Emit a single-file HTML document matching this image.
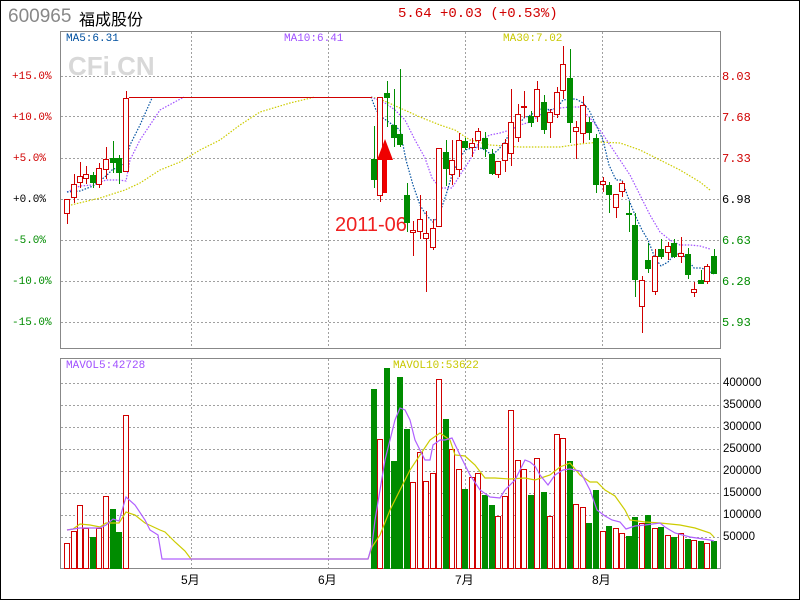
<!DOCTYPE html>
<html><head><meta charset="utf-8"><style>
html,body{margin:0;padding:0;background:#fff}
#w{position:relative;width:798px;height:598px;border:1px solid #000;overflow:hidden;font-family:"Liberation Mono",monospace}
svg{position:absolute;left:-1px;top:-1px}
.t{position:absolute;white-space:nowrap}
</style></head><body><div id="w">
<svg width="800" height="600" viewBox="0 0 800 600">
<g stroke="#a0a0a0" stroke-dasharray="2,2" stroke-width="1">
<line x1="61" x2="720" y1="76.5" y2="76.5"/><line x1="61" x2="720" y1="116.5" y2="116.5"/><line x1="61" x2="720" y1="158.5" y2="158.5"/><line x1="61" x2="720" y1="199.5" y2="199.5"/><line x1="61" x2="720" y1="240.5" y2="240.5"/><line x1="61" x2="720" y1="281.5" y2="281.5"/><line x1="61" x2="720" y1="322.5" y2="322.5"/>
<line x1="191.5" x2="191.5" y1="32" y2="348"/><line x1="328.5" x2="328.5" y1="32" y2="348"/><line x1="465.5" x2="465.5" y1="32" y2="348"/><line x1="602.5" x2="602.5" y1="32" y2="348"/>
<line x1="61" x2="720" y1="383.5" y2="383.5"/><line x1="61" x2="720" y1="405.5" y2="405.5"/><line x1="61" x2="720" y1="427.5" y2="427.5"/><line x1="61" x2="720" y1="449.5" y2="449.5"/><line x1="61" x2="720" y1="471.5" y2="471.5"/><line x1="61" x2="720" y1="493.5" y2="493.5"/><line x1="61" x2="720" y1="515.5" y2="515.5"/><line x1="61" x2="720" y1="537.5" y2="537.5"/>
<line x1="191.5" x2="191.5" y1="359" y2="568"/><line x1="328.5" x2="328.5" y1="359" y2="568"/><line x1="465.5" x2="465.5" y1="359" y2="568"/><line x1="602.5" x2="602.5" y1="359" y2="568"/>
</g>
<rect x="60.5" y="31.5" width="660" height="317" fill="none" stroke="#888"/>
<rect x="60.5" y="358.5" width="660" height="210" fill="none" stroke="#888"/>
<text x="68" y="75" font-family="Liberation Sans,sans-serif" font-weight="bold" font-size="26" fill="#d8d8d8">CFi.CN</text>
<text x="335" y="231" font-family="Liberation Sans,sans-serif" font-size="20" fill="#f02020">2011-06</text>
<g fill="none" stroke-width="1.2" stroke-dasharray="1.5,1.5">
<polyline stroke="#cccc00" points="71,205 100,198 125,190 140,183 160,170 180,162 200,150 220,140 240,125 260,112 290,103 315,97"/>
<polyline stroke="#cccc00" points="371,97 380,99 400,108 420,117 440,125 455,130 470,140 490,145 520,147 540,147 560,147 580,144 600,142 620,143 640,150 660,160 680,170 700,182 710,190"/>
<polyline stroke="#a050ff" points="67,192 80,186 93,185 106,180 119,180 126,181 130,160 140,140 150,125 160,110 184,97"/>
<polyline stroke="#a050ff" points="371,97 385,103 395,110 405,120 415,140 425,158 432,178 440,188 452,188 460,175 470,160 480,140 490,135 500,133 510,130 520,125 530,122 540,115 550,110 560,108 570,107 580,107 590,118 600,130 610,145 620,160 630,175 640,195 650,215 660,232 670,240 680,245 690,245 700,246 710,249"/>
<polyline stroke="#0050a0" points="67,192 80,191 93,186 106,176 113,169 119,168 126,160 130,145 140,125 152,98"/>
<polyline stroke="#0050a0" points="371,97 376,110 383,118 393,125 400,130 406,160 413,185 420,205 426,215 433,222 439,215 446,195 452,175 459,160 465,150 472,148 478,147 485,150 492,155 498,150 505,142 511,130 518,125 524,118 531,115 537,110 544,108 550,110 557,108 563,100 570,99 576,99 583,103 589,110 596,125 603,140 609,165 616,180 622,180 629,200 635,215 642,230 648,240 655,258 661,266 668,262 674,255 681,253 688,260 694,268 701,268 707,270 714,274"/>
</g>
<line x1="129" x2="372" y1="97.5" y2="97.5" stroke="#d00000" stroke-width="1"/>
<g stroke-width="1">
<g stroke="#d00000" fill="#fff">
<line x1="67.5" x2="67.5" y1="199" y2="224"/><rect x="64.5" y="199.5" width="5" height="14"/>
<line x1="74.5" x2="74.5" y1="174" y2="203"/><rect x="71.5" y="184.5" width="5" height="13"/>
<line x1="80.5" x2="80.5" y1="162" y2="188"/><rect x="77.5" y="176.5" width="5" height="6"/>
<line x1="86.5" x2="86.5" y1="166" y2="184"/><rect x="83.5" y="174.5" width="5" height="4"/>
<line x1="99.5" x2="99.5" y1="163" y2="188"/><rect x="96.5" y="168.5" width="5" height="16"/>
<line x1="106.5" x2="106.5" y1="147" y2="179"/><rect x="103.5" y="159.5" width="5" height="10"/>
<line x1="126.5" x2="126.5" y1="91" y2="171"/><rect x="123.5" y="98.5" width="5" height="73"/>
<line x1="380.5" x2="380.5" y1="97" y2="202"/><rect x="377.5" y="97.5" width="5" height="98"/>
<line x1="413.5" x2="413.5" y1="221" y2="256"/><rect x="410.5" y="230.5" width="5" height="2"/>
<line x1="420.5" x2="420.5" y1="195" y2="239"/><rect x="417.5" y="219.5" width="5" height="12"/>
<line x1="426.5" x2="426.5" y1="211" y2="292"/><rect x="423.5" y="233.5" width="5" height="5"/>
<line x1="433.5" x2="433.5" y1="219" y2="250"/><rect x="430.5" y="228.5" width="5" height="19"/>
<line x1="439.5" x2="439.5" y1="148" y2="226"/><rect x="436.5" y="148.5" width="5" height="78"/>
<line x1="452.5" x2="452.5" y1="140" y2="185"/><rect x="449.5" y="160.5" width="5" height="14"/>
<line x1="459.5" x2="459.5" y1="133" y2="177"/><rect x="456.5" y="140.5" width="5" height="29"/>
<line x1="472.5" x2="472.5" y1="138" y2="157"/><rect x="469.5" y="143.5" width="5" height="4"/>
<line x1="478.5" x2="478.5" y1="128" y2="150"/><rect x="475.5" y="131.5" width="5" height="9"/>
<line x1="498.5" x2="498.5" y1="161" y2="178"/><rect x="495.5" y="161.5" width="5" height="13"/>
<line x1="505.5" x2="505.5" y1="139" y2="172"/><rect x="502.5" y="143.5" width="5" height="17"/>
<line x1="511.5" x2="511.5" y1="89" y2="166"/><rect x="508.5" y="122.5" width="5" height="31"/>
<line x1="518.5" x2="518.5" y1="104" y2="142"/><rect x="515.5" y="114.5" width="5" height="23"/>
<line x1="524.5" x2="524.5" y1="91" y2="118"/><rect x="521.5" y="106.5" width="5" height="1"/>
<line x1="537.5" x2="537.5" y1="81" y2="122"/><rect x="534.5" y="89.5" width="5" height="27"/>
<line x1="550.5" x2="550.5" y1="109" y2="138"/><rect x="547.5" y="112.5" width="5" height="10"/>
<line x1="557.5" x2="557.5" y1="87" y2="118"/><rect x="554.5" y="92.5" width="5" height="22"/>
<line x1="563.5" x2="563.5" y1="46" y2="99"/><rect x="560.5" y="64.5" width="5" height="26"/>
<line x1="576.5" x2="576.5" y1="121" y2="159"/><rect x="573.5" y="127.5" width="5" height="4"/>
<line x1="583.5" x2="583.5" y1="96" y2="143"/><rect x="580.5" y="105.5" width="5" height="28"/>
<line x1="603.5" x2="603.5" y1="177" y2="192"/><rect x="600.5" y="181.5" width="5" height="3"/>
<line x1="616.5" x2="616.5" y1="194" y2="218"/><rect x="613.5" y="194.5" width="5" height="13"/>
<line x1="622.5" x2="622.5" y1="181" y2="197"/><rect x="619.5" y="183.5" width="5" height="8"/>
<line x1="642.5" x2="642.5" y1="276" y2="333"/><rect x="639.5" y="280.5" width="5" height="26"/>
<line x1="655.5" x2="655.5" y1="249" y2="295"/><rect x="652.5" y="256.5" width="5" height="35"/>
<line x1="668.5" x2="668.5" y1="242" y2="260"/><rect x="665.5" y="246.5" width="5" height="6"/>
<line x1="681.5" x2="681.5" y1="237" y2="263"/><rect x="678.5" y="253.5" width="5" height="3"/>
<line x1="694.5" x2="694.5" y1="282" y2="297"/><rect x="691.5" y="289.5" width="5" height="3"/>
<line x1="707.5" x2="707.5" y1="264" y2="284"/><rect x="704.5" y="266.5" width="5" height="15"/>
</g>
<g stroke="#008c00" fill="#008c00">
<line x1="93.5" x2="93.5" y1="172" y2="188"/><rect x="90.5" y="175.5" width="5" height="7"/>
<line x1="113.5" x2="113.5" y1="141" y2="173"/><rect x="110.5" y="158.5" width="5" height="4"/>
<line x1="119.5" x2="119.5" y1="155" y2="184"/><rect x="116.5" y="158.5" width="5" height="14"/>
<line x1="374.5" x2="374.5" y1="126" y2="188"/><rect x="371.5" y="159.5" width="5" height="20"/>
<line x1="387.5" x2="387.5" y1="81" y2="127"/><rect x="384.5" y="93.5" width="5" height="4"/>
<line x1="394.5" x2="394.5" y1="89" y2="147"/><rect x="391.5" y="125.5" width="5" height="12"/>
<line x1="400.5" x2="400.5" y1="69" y2="147"/><rect x="397.5" y="134.5" width="5" height="10"/>
<line x1="407.5" x2="407.5" y1="183" y2="232"/><rect x="404.5" y="195.5" width="5" height="27"/>
<line x1="446.5" x2="446.5" y1="140" y2="186"/><rect x="443.5" y="152.5" width="5" height="16"/>
<line x1="465.5" x2="465.5" y1="138" y2="150"/><rect x="462.5" y="141.5" width="5" height="6"/>
<line x1="485.5" x2="485.5" y1="132" y2="157"/><rect x="482.5" y="138.5" width="5" height="10"/>
<line x1="492.5" x2="492.5" y1="149" y2="175"/><rect x="489.5" y="154.5" width="5" height="19"/>
<line x1="531.5" x2="531.5" y1="111" y2="127"/><rect x="528.5" y="116.5" width="5" height="6"/>
<line x1="544.5" x2="544.5" y1="95" y2="134"/><rect x="541.5" y="102.5" width="5" height="27"/>
<line x1="570.5" x2="570.5" y1="49" y2="143"/><rect x="567.5" y="78.5" width="5" height="44"/>
<line x1="589.5" x2="589.5" y1="117" y2="140"/><rect x="586.5" y="122.5" width="5" height="10"/>
<line x1="596.5" x2="596.5" y1="134" y2="193"/><rect x="593.5" y="138.5" width="5" height="46"/>
<line x1="609.5" x2="609.5" y1="182" y2="213"/><rect x="606.5" y="185.5" width="5" height="9"/>
<line x1="629.5" x2="629.5" y1="201" y2="232"/><rect x="626.5" y="213.5" width="5" height="1"/>
<line x1="635.5" x2="635.5" y1="213" y2="297"/><rect x="632.5" y="225.5" width="5" height="54"/>
<line x1="648.5" x2="648.5" y1="243" y2="273"/><rect x="645.5" y="260.5" width="5" height="8"/>
<line x1="661.5" x2="661.5" y1="239" y2="259"/><rect x="658.5" y="249.5" width="5" height="7"/>
<line x1="674.5" x2="674.5" y1="239" y2="258"/><rect x="671.5" y="243.5" width="5" height="13"/>
<line x1="688.5" x2="688.5" y1="248" y2="279"/><rect x="685.5" y="254.5" width="5" height="20"/>
<line x1="701.5" x2="701.5" y1="270" y2="284"/><rect x="698.5" y="280.5" width="5" height="3"/>
<line x1="714.5" x2="714.5" y1="249" y2="274"/><rect x="711.5" y="256.5" width="5" height="17"/>
</g>
</g>
<polygon fill="#f00000" points="383,193 387,193 387,160 393,160 385,139 377,160 383,160"/>
<g stroke="#d00000" fill="#fff">
<rect x="64.5" y="543.5" width="5" height="25"/><rect x="71.5" y="531.5" width="5" height="37"/><rect x="77.5" y="505.5" width="5" height="63"/><rect x="83.5" y="528.5" width="5" height="40"/><rect x="96.5" y="528.5" width="5" height="40"/><rect x="103.5" y="496.5" width="5" height="72"/><rect x="123.5" y="415.5" width="5" height="153"/>
<rect x="377.5" y="439.5" width="5" height="129"/><rect x="410.5" y="482.5" width="5" height="86"/><rect x="417.5" y="452.5" width="5" height="116"/><rect x="423.5" y="481.5" width="5" height="87"/><rect x="430.5" y="473.5" width="5" height="95"/><rect x="436.5" y="379.5" width="5" height="189"/><rect x="449.5" y="449.5" width="5" height="119"/><rect x="456.5" y="469.5" width="5" height="99"/><rect x="469.5" y="477.5" width="5" height="91"/><rect x="475.5" y="473.5" width="5" height="95"/><rect x="495.5" y="516.5" width="5" height="52"/><rect x="502.5" y="496.5" width="5" height="72"/><rect x="508.5" y="410.5" width="5" height="158"/><rect x="515.5" y="460.5" width="5" height="108"/><rect x="521.5" y="469.5" width="5" height="99"/><rect x="534.5" y="458.5" width="5" height="110"/><rect x="547.5" y="516.5" width="5" height="52"/><rect x="554.5" y="434.5" width="5" height="134"/><rect x="560.5" y="438.5" width="5" height="130"/><rect x="573.5" y="504.5" width="5" height="64"/><rect x="580.5" y="507.5" width="5" height="61"/><rect x="600.5" y="531.5" width="5" height="37"/><rect x="613.5" y="528.5" width="5" height="40"/><rect x="619.5" y="533.5" width="5" height="35"/><rect x="639.5" y="523.5" width="5" height="45"/><rect x="652.5" y="528.5" width="5" height="40"/><rect x="665.5" y="535.5" width="5" height="33"/><rect x="678.5" y="533.5" width="5" height="35"/><rect x="691.5" y="540.5" width="5" height="28"/><rect x="704.5" y="543.5" width="5" height="25"/>
</g>
<g stroke="#008c00" fill="#008c00">
<rect x="90.5" y="537.5" width="5" height="31"/><rect x="110.5" y="509.5" width="5" height="59"/><rect x="116.5" y="532.5" width="5" height="36"/>
<rect x="371.5" y="389.5" width="5" height="179"/><rect x="384.5" y="368.5" width="5" height="200"/><rect x="391.5" y="461.5" width="5" height="107"/><rect x="397.5" y="377.5" width="5" height="191"/><rect x="404.5" y="429.5" width="5" height="139"/><rect x="443.5" y="419.5" width="5" height="149"/><rect x="462.5" y="489.5" width="5" height="79"/><rect x="482.5" y="495.5" width="5" height="73"/><rect x="489.5" y="505.5" width="5" height="63"/><rect x="528.5" y="495.5" width="5" height="73"/><rect x="541.5" y="492.5" width="5" height="76"/><rect x="567.5" y="461.5" width="5" height="107"/><rect x="586.5" y="523.5" width="5" height="45"/><rect x="593.5" y="490.5" width="5" height="78"/><rect x="606.5" y="526.5" width="5" height="42"/><rect x="626.5" y="536.5" width="5" height="32"/><rect x="632.5" y="517.5" width="5" height="51"/><rect x="645.5" y="515.5" width="5" height="53"/><rect x="658.5" y="527.5" width="5" height="41"/><rect x="671.5" y="537.5" width="5" height="31"/><rect x="685.5" y="539.5" width="5" height="29"/><rect x="698.5" y="541.5" width="5" height="27"/><rect x="711.5" y="541.5" width="5" height="27"/>
</g>
<g fill="none" stroke-width="1.2">
<polyline stroke="#cccc00" points="67,530 73,529 80,524 90,525 100,527 106,523 119,523 126,512 135,515 145,523 160,530 165,532 175,542 185,551 191,559 368,559 372,547 380,535 390,510 400,490 410,470 420,455 430,440 440,433 450,440 455,455 465,456 475,465 485,478 495,478 510,479 525,478 535,480 550,475 560,467 570,463 580,475 590,482 597,482 605,490 615,496 625,510 630,520 645,522 660,523 680,525 695,528 710,533 714,537"/>
<polyline stroke="#b060ff" points="67,530 80,528 100,528 106,525 113,519 119,521 126,497 135,505 145,520 150,530 158,535 162,559 191,559 368,559 372,545 375,520 380,490 385,460 390,440 395,420 400,408 405,410 410,420 415,440 420,450 425,460 430,460 433,445 440,440 445,440 452,438 460,455 470,475 480,490 490,497 500,498 505,490 510,485 515,480 520,470 525,460 530,462 535,466 540,475 548,485 555,475 563,470 570,469 580,471 590,490 597,510 605,516 612,520 620,522 626,529 635,526 645,525 660,523 665,527 675,533 690,537 710,540 714,541"/>
</g>
</svg>
<div class="t" style="left:7px;top:5px;font-family:'Liberation Sans',sans-serif;font-size:19px;color:#888">600965</div>
<div class="t" style="left:78px;top:5px;font-family:'Liberation Sans','Noto Sans CJK SC',sans-serif;font-size:16px;color:#000">福成股份</div>
<div class="t" style="left:397px;top:5px;font-size:14px;color:#d00000">5.64 +0.03 (+0.53%)</div>
<div class="t" style="left:65px;top:32px;font-size:11px;color:#0050a0">MA5:6.31</div>
<div class="t" style="left:283px;top:32px;font-size:11px;color:#a050ff">MA10:6.41</div>
<div class="t" style="left:502px;top:32px;font-size:11px;color:#c8c800">MA30:7.02</div>
<div class="t" style="left:65px;top:359px;font-size:11px;color:#a050ff">MAVOL5:42728</div>
<div class="t" style="left:392px;top:359px;font-size:11px;color:#c8c800">MAVOL10:53622</div>
<div style="position:absolute;left:11px;top:2px;font-size:11px;line-height:13px">
<div class="t" style="top:68px;color:#d00000">+15.0%</div>
<div class="t" style="top:109px;color:#d00000">+10.0%</div>
<div class="t" style="top:150px;color:#d00000;left:1px">+5.0%</div>
<div class="t" style="top:191px;color:#000;left:1px">+0.0%</div>
<div class="t" style="top:232px;color:#008c00;left:1px">-5.0%</div>
<div class="t" style="top:273px;color:#008c00">-10.0%</div>
<div class="t" style="top:314px;color:#008c00">-15.0%</div>
</div>
<div style="position:absolute;left:721px;top:2px;font-size:12px;line-height:13px">
<div class="t" style="top:68px;color:#d00000">8.03</div>
<div class="t" style="top:109px;color:#d00000">7.68</div>
<div class="t" style="top:150px;color:#d00000">7.33</div>
<div class="t" style="top:191px;color:#000">6.98</div>
<div class="t" style="top:232px;color:#008c00">6.63</div>
<div class="t" style="top:273px;color:#008c00">6.28</div>
<div class="t" style="top:314px;color:#008c00">5.93</div>
</div>
<div style="position:absolute;left:722px;top:1px;font-family:'Liberation Sans',sans-serif;font-size:11.5px;line-height:13px;color:#000">
<div class="t" style="top:375px">400000</div>
<div class="t" style="top:397px">350000</div>
<div class="t" style="top:419px">300000</div>
<div class="t" style="top:441px">250000</div>
<div class="t" style="top:463px">200000</div>
<div class="t" style="top:485px">150000</div>
<div class="t" style="top:507px">100000</div>
<div class="t" style="top:529px">50000</div>
</div>
<div style="position:absolute;top:570px;left:0;font-family:'Liberation Sans','Noto Sans CJK SC',sans-serif;font-size:12px;color:#000">
<span class="t" style="left:180px">5月</span><span class="t" style="left:317px">6月</span><span class="t" style="left:454px">7月</span><span class="t" style="left:591px">8月</span>
</div>
</div></body></html>
